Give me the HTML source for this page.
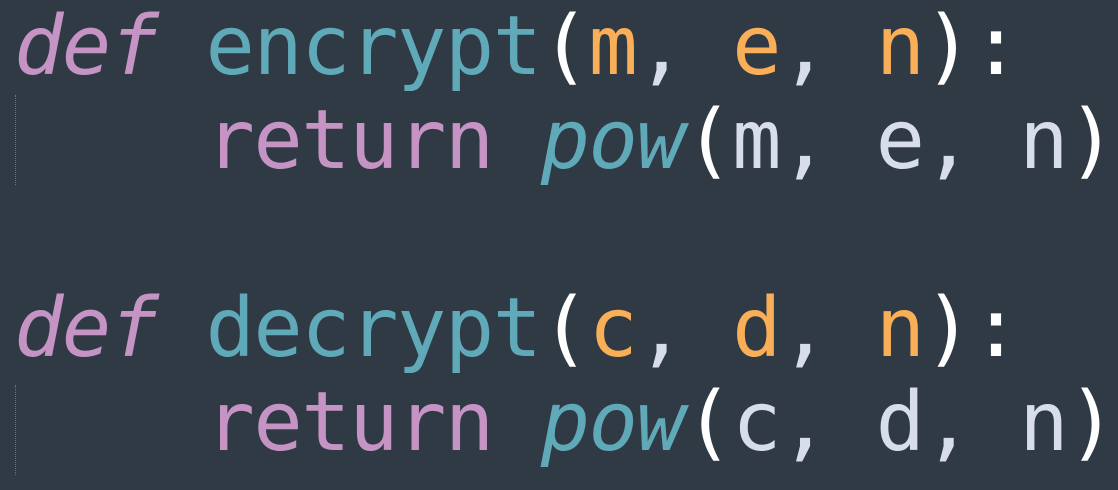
<!DOCTYPE html>
<html><head><style>
html,body{margin:0;padding:0;background:#2f3a45;width:1118px;height:490px;overflow:hidden}
pre{margin:0;position:absolute;left:14px;top:0;font-family:"DejaVu Sans Mono","Liberation Mono",monospace;font-size:82px;letter-spacing:-1.5px;line-height:94px;color:#d8dee9}
.k{color:#c594c5;font-style:italic}
.r{color:#c594c5}
.f{color:#5fa9b8}
.fi{color:#5fa9b8;font-style:italic}
.p{color:#f9ae58}
.w{color:#ffffff}
.g{position:absolute;left:15px;width:0;border-left:1px dotted #6a737d}
</style></head><body>
<div class="g" style="top:95px;height:90px"></div>
<div class="g" style="top:385px;height:90px"></div>
<pre><span class="k">def</span> <span class="f">encrypt</span><span class="w">(</span><span class="p">m</span>, <span class="p">e</span>, <span class="p">n</span><span class="w">):</span>
    <span class="r">return</span> <span class="fi">pow</span><span class="w">(</span>m, e, n<span class="w">)</span>

<span class="k">def</span> <span class="f">decrypt</span><span class="w">(</span><span class="p">c</span>, <span class="p">d</span>, <span class="p">n</span><span class="w">):</span>
    <span class="r">return</span> <span class="fi">pow</span><span class="w">(</span>c, d, n<span class="w">)</span></pre>
</body></html>
